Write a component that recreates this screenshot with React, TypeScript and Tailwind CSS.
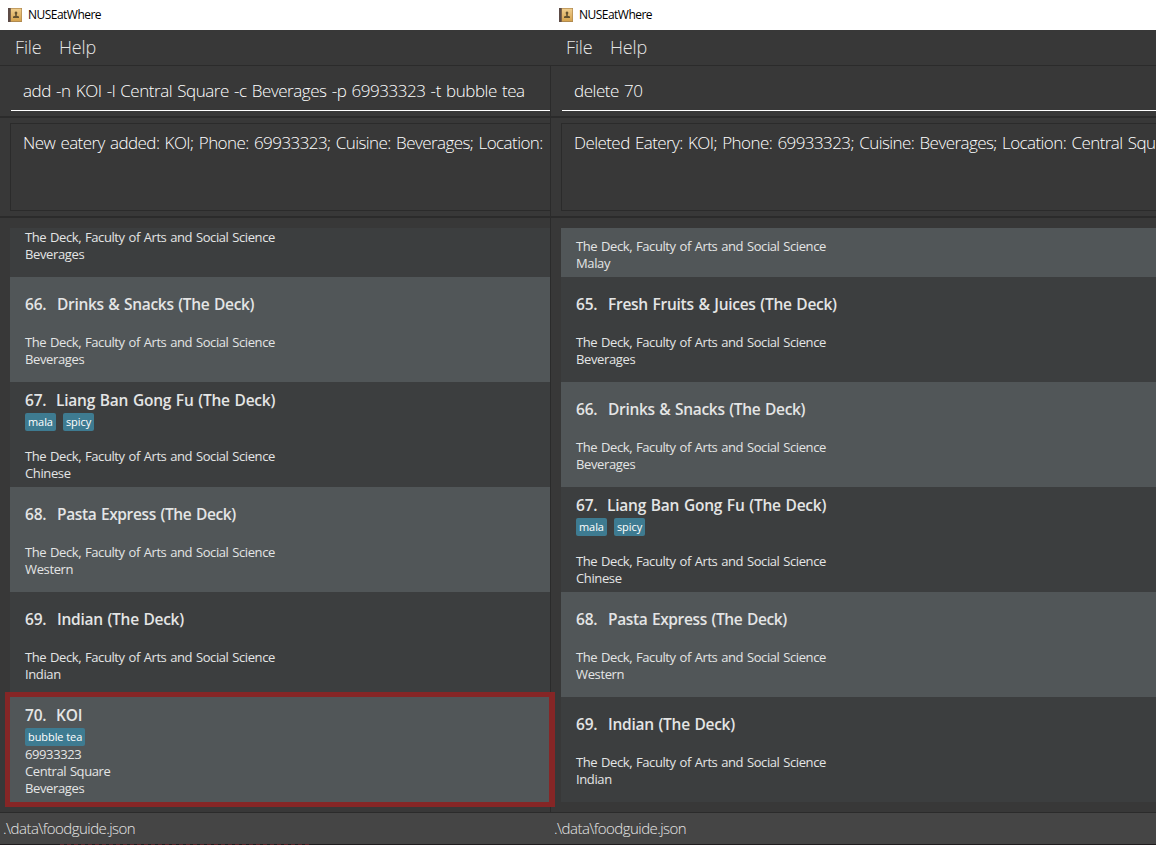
type Eatery = {
  no?: string;
  name?: string;
  nameClass?: string;
  tags?: string[];
  phone?: string;
  location: string;
  cuisine: string;
};

const DECK = 'The Deck, Faculty of Arts and Social Science';

const fruits: Eatery = { no: '65.', name: 'Fresh Fruits & Juices (The Deck)', nameClass: 'tracking-[-0.27px]', location: DECK, cuisine: 'Beverages' };
const drinks: Eatery = { no: '66.', name: 'Drinks & Snacks (The Deck)', nameClass: 'tracking-[-0.32px]', location: DECK, cuisine: 'Beverages' };
const liang: Eatery = { no: '67.', name: 'Liang Ban Gong Fu (The Deck)', nameClass: 'tracking-[-0.22px]', tags: ['mala', 'spicy'], location: DECK, cuisine: 'Chinese' };
const pasta: Eatery = { no: '68.', name: 'Pasta Express (The Deck)', nameClass: 'tracking-[-0.37px]', location: DECK, cuisine: 'Western' };
const indian: Eatery = { no: '69.', name: 'Indian (The Deck)', nameClass: 'tracking-[-0.27px]', location: DECK, cuisine: 'Indian' };
const koi: Eatery = { no: '70.', name: 'KOI', nameClass: 'tracking-[-0.2px]', tags: ['bubble tea'], phone: '69933323', location: 'Central Square', cuisine: 'Beverages' };

function AppIcon() {
  return (
    <svg width="14" height="14" viewBox="0 0 14 14" className="mr-[6px] shrink-0">
      <defs>
        <linearGradient id="cover" x1="0" y1="0" x2="0" y2="1">
          <stop offset="0" stopColor="#efcd8d" />
          <stop offset="1" stopColor="#d6a44f" />
        </linearGradient>
      </defs>
      <rect x="0" y="0" width="14" height="14" fill="#b08a50" />
      <rect x="3" y="0.700" width="10.300" height="12.300" fill="url(#cover)" />
      <rect x="0" y="0" width="2.600" height="14" fill="#5c4b46" />
      <path d="M8 3.500a1.500 1.500 0 0 1 .9 2.600l-.2 1.700 2.300.6v1.600H5V8.400l2.300-.6-.2-1.700A1.500 1.500 0 0 1 8 3.500z" fill="#62502f" />
    </svg>
  );
}

function Row({ eatery, alt, clip }: { eatery: Eatery; alt: boolean; clip?: 'plain' | 'tagged' }) {
  const tagged = clip === 'tagged' || !!eatery.tags;
  return (
    <div
      className={`flex shrink-0 flex-col justify-end overflow-hidden pl-[15px] text-[#e4e5e5] ${clip ? 'h-[49px]' : 'h-[105px]'} ${
        alt ? 'bg-[#515658]' : 'bg-[#3c3e3f]'
      } ${tagged ? 'pb-[5px]' : 'pb-[14px]'}`}
    >
      {!clip && (
        <div className={`flex items-center text-[15.5px] font-semibold ${tagged ? 'h-[20px]' : 'h-[24px]'}`}>
          <span className={`tracking-[-0.2px] ${tagged ? 'w-[31px]' : 'w-[32px]'}`}>{eatery.no}</span>
          <span className={`[word-spacing:0.900px] ${eatery.nameClass}`}>{eatery.name}</span>
        </div>
      )}
      {!clip && eatery.tags && (
        <div className="mt-[2px] flex h-[18px] gap-[7px]">
          {eatery.tags.map((tag) => (
            <span key={tag} className="rounded-[2px] bg-[#3e7b91] px-[3px] text-[11px] leading-[18px] tracking-[-0.07px] text-white">
              {tag}
            </span>
          ))}
        </div>
      )}
      {!clip && <p className="h-[17px] text-[13px] leading-[17px] tracking-[-0.4px]">{eatery.phone}</p>}
      <p className="h-[17px] text-[13px] leading-[17px] tracking-[-0.4px] [word-spacing:0.800px]">{eatery.location}</p>
      <p className="h-[17px] text-[13px] leading-[17px] tracking-[-0.37px]">{eatery.cuisine}</p>
    </div>
  );
}

type PanelProps = {
  side: 'left' | 'right';
  command: string;
  result: string;
  first: Eatery;
  firstClip: 'plain' | 'tagged';
  rows: Eatery[];
  startAlt: boolean;
};

function Panel({ side, command, result, first, firstClip, rows, startAlt }: PanelProps) {
  const left = side === 'left';
  return (
    <div className={`flex h-full shrink-0 flex-col bg-[#383838] ${left ? 'w-[551px]' : 'w-[605px]'}`}>
      <div className="flex h-[30px] items-center bg-white pl-[8px] pb-[1px] text-[12px] tracking-[-0.52px] text-black">
        <AppIcon />
        NUSEatWhere
      </div>
      <div className="flex h-[36px] items-center gap-[17.5px] border-b border-[#2b2b2b] pl-[15px] text-[18px] font-light tracking-[-0.150px] text-[#e6e6e6]">
        <span>File</span>
        <span>Help</span>
      </div>
      <div className={`flex h-[746px] flex-col ${left ? 'border-r border-[#2b2b2b]' : ''}`}>
        <div className="h-[52px] border-b-2 border-[#2b2b2b] pl-[11px]">
          <div className="h-[45px] border-b border-white pl-[12px] pt-[5px] text-[17px] font-light leading-[40px] tracking-[-0.46px] [word-spacing:1.200px] whitespace-nowrap text-white">
            {command}
          </div>
        </div>
        <div className="h-[100px] border-b-2 border-[#2b2b2b] pt-[5px] pl-[10px]">
          <div className="h-[88px] border-y border-l border-[#2b2b2b] pt-[6px] pl-[12px] text-[17px] font-light leading-[26px] tracking-[-0.570px] [word-spacing:1.400px] whitespace-nowrap text-white">
            {result}
          </div>
        </div>
        <div className="flex flex-col pt-[10px] pl-[10px]">
          <Row eatery={first} alt={!startAlt} clip={firstClip} />
          {rows.map((eatery, i) => (
            <Row key={eatery.no} eatery={eatery} alt={(i % 2 === 0) === startAlt} />
          ))}
        </div>
      </div>
      <div className="flex h-[32px] items-center border-t border-[#2b2b2b] bg-[#454545] pl-[3px] text-[15px] font-light tracking-[-0.54px] text-[#e6e6e6]">
        {'.\\data\\foodguide.json'}
      </div>
      <div className="h-px bg-[#201c1e]">
        {left && <div className="ml-[60px] h-px w-[250px] bg-[repeating-linear-gradient(90deg,#5a2229_0_4px,#201c1e_4px_7px)]" />}
      </div>
    </div>
  );
}

export default function App() {
  return (
    <div className="relative flex h-[845px] w-[1156px] overflow-hidden font-['Open_Sans','Noto_Sans',sans-serif]">
      <Panel
        side="left"
        command="add -n KOI -l Central Square -c Beverages -p 69933323 -t bubble tea"
        result="New eatery added: KOI; Phone: 69933323; Cuisine: Beverages; Location:"
        first={{ location: DECK, cuisine: 'Beverages' }}
        firstClip="plain"
        rows={[drinks, liang, pasta, indian, koi]}
        startAlt
      />
      <Panel
        side="right"
        command="delete 70"
        result="Deleted Eatery: KOI; Phone: 69933323; Cuisine: Beverages; Location: Central Squ"
        first={{ location: DECK, cuisine: 'Malay' }}
        firstClip="tagged"
        rows={[fruits, drinks, liang, pasta, indian]}
        startAlt={false}
      />
      <div className="absolute top-[692px] left-[5px] h-[115px] w-[550px] border-[5px] border-r-[6px] border-[#862626]" />
    </div>
  );
}
